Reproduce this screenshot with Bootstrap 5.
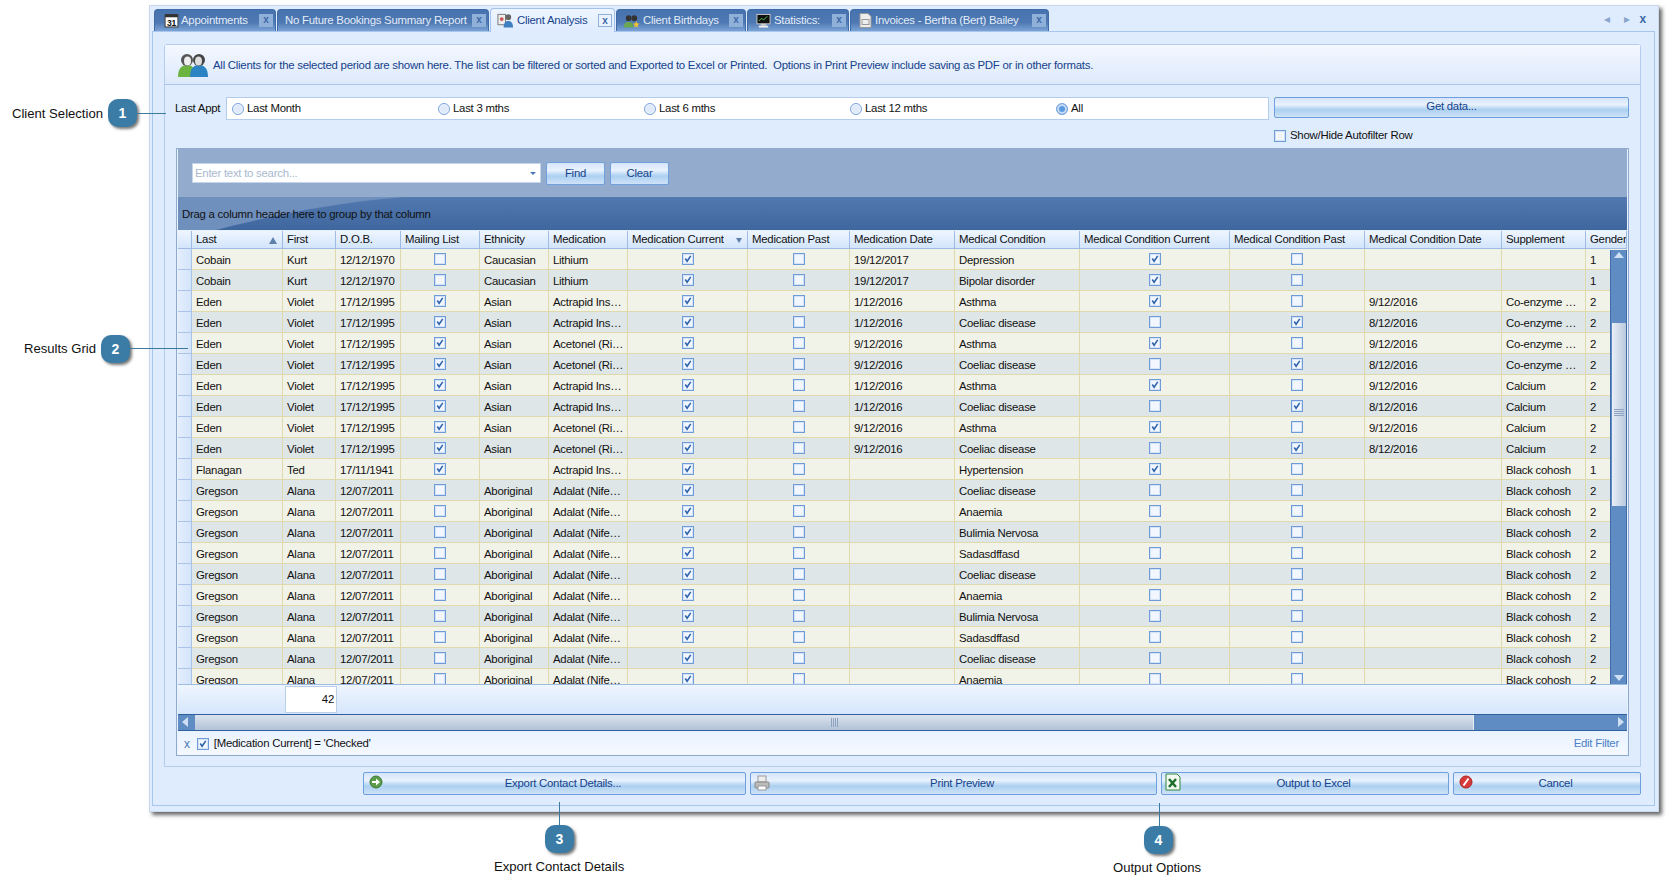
<!DOCTYPE html>
<html lang="en"><head><meta charset="utf-8"><title>Client Analysis</title>
<link href="https://cdn.jsdelivr.net/npm/bootstrap@5.3.0/dist/css/bootstrap.min.css" rel="stylesheet">
<style>
html,body{height:891px;overflow:hidden;background:#fff}
body{position:relative;font:11.4px/1.2 "Liberation Sans",Arial,sans-serif;letter-spacing:-.25px;color:#15428b}
.win{margin:5px 0 0 149px;width:1510px;height:807px;background:#dfecfe;border:1px solid #c9d8ec;box-shadow:3px 3px 4px #666;padding:0 3px 0 2px}
.tabs{height:25px;padding:3px 0 0 2px;position:relative}
.tb{height:22px;margin-right:1px;padding:0 2px 0 7px;border:1px solid #3f6ca8;border-bottom:0;border-radius:4px 4px 0 0;background:linear-gradient(#4672ad,#4f79b3 60%,#7ba3d6);color:#e3edfa;gap:3px;white-space:nowrap}
.tb.on{height:24px;margin-top:-1px;background:linear-gradient(#eef5ff,#dfecfe);border-color:#a3c2ea;color:#15428b;margin-bottom:-1px;z-index:1}
.tb .x{width:14px;height:13px;background:#8fb0d9;color:#3d6aa8;font:bold 10px/12px "Liberation Sans",sans-serif;text-align:center;margin-left:auto}
.tb.on .x{background:#eaf2ff;border:1px solid #8fb0d9;line-height:11px}
.t1{width:122px;padding-left:9px;gap:2px}.t2{width:212px}.t3{width:125px;padding-left:6px}.t4{width:130px;padding-left:6px}.t5{width:102px;padding-left:8px}.t6{width:199px;padding-left:8px}
.tnav{position:absolute;right:9px;top:6px;gap:10px;color:#8aa5cc;font-size:12px;line-height:14px}
.tnav span:first-child{margin-right:4px}
.tnav b{color:#3d6aa8}
.pane{height:775px;border:1px solid #a9c6ec;padding:12px 13px 0 11px}
.box{height:723px;border:1px solid #b4cdef;border-radius:3px 3px 0 0}
.info{height:40px;border-bottom:1px solid #a9c6ec;background:linear-gradient(#f3f8ff,#dde9fb);padding:0 0 0 12px;gap:4px}
.info span{padding-top:2px}
.body{padding:12px 11px 0}
.lab{width:51px;margin-left:-1px;color:#111;line-height:23px;white-space:nowrap}
.rg{width:1043px;height:23px;background:#fff;border:1px solid #b4cdef;padding:1px 0 0 5px;color:#111}
.rg>div{width:206px;gap:3px}
.form-check-input,.form-check-input[type=checkbox]{width:12px;height:12px;margin:0;border-radius:0;border:1px solid #6f9bd8;background-color:#f2f7ff;box-shadow:inset 0 0 0 1px #d5e3f7;float:none;flex:none;vertical-align:middle}
.form-check-input:checked{background-color:#f2f7ff;border-color:#6f9bd8;background-size:100%;background-image:url("data:image/svg+xml,%3Csvg xmlns='http://www.w3.org/2000/svg' viewBox='0 0 11 11'%3E%3Cpath d='M2.5 5l2 3 4-6' fill='none' stroke='%232f63ab' stroke-width='1.7'/%3E%3C/svg%3E")}
.form-check-input[type=radio]{width:12px;height:12px;border-radius:50%;border-color:#7ba4dc;background-color:#dfeafa;box-shadow:inset 0 0 0 1px #f2f7ff}
.form-check-input[type=radio]:checked{background-image:none;background-color:#5c9be0;box-shadow:inset 0 0 0 2px #c8dcf5}
.aero{border:1px solid #6f9fdc;border-radius:2px;background:linear-gradient(#d5e5fa,#e9f2fd 35%,#acd0f0 62%,#cfe2f8);color:#15428b;padding:0;font:inherit;line-height:1;letter-spacing:inherit}
.aero:hover{color:#15428b}
.getd{height:21px;padding-bottom:2px}
.shw{margin-top:11px;color:#111}
.grid{position:relative;height:608px;border:1px solid #8fa9cf;padding:0 1px;background:#e8f1fe}
.search{height:48px;background:#93abcc;padding:14px 0 0 14px;gap:5px}
.sinp{width:349px;height:20px;background:#fff;border:1px solid #c6d5ea;color:#a9b8cf;padding:0 2px;line-height:18px;position:relative}
.sinp::after{content:"";position:absolute;right:4px;top:8px;border:3px solid transparent;border-top-color:#4a78b5}
.sb{width:59px;height:23px;margin-top:-1px}
.gp{height:33px;position:relative;background:linear-gradient(#5279af,#3f679f);color:#111;padding-left:4px;line-height:35px;overflow:hidden}
.gp svg{position:absolute;left:0;top:0}
.gp span{position:relative}
.tw{position:relative;height:453px;overflow:hidden;margin-top:1px}
.grid table{table-layout:fixed;width:1449px;margin:0;color:#111;--bs-table-bg:transparent;border-collapse:separate;border-spacing:0}
.grid th,.grid td{padding:2px 0 0 4px;height:21px;line-height:18px;vertical-align:middle;white-space:nowrap;overflow:hidden;font-weight:400;border:0;border-right:1px solid #e0d9ab;border-bottom:1px solid #e0d9ab;box-shadow:none}
.grid th{height:18px;padding:0 0 0 4px;line-height:17px;background:linear-gradient(#eef5ff,#d3e5fb);border-color:#9dbbe3;position:relative}
.grid tr:nth-child(odd) td{background:#f1f2e8}
.grid tr:nth-child(even) td{background:#dee6e7}
.grid td.i{background:linear-gradient(90deg,#e4eefd,#d3e4fa)!important;border-color:#a9c4e8}
.grid td.c{text-align:center;padding:0;line-height:0}
.grid td.c .form-check-input{vertical-align:middle}
.sort{position:absolute;right:5px;top:6px;border:4px solid transparent;border-top:0;border-bottom:7px solid #5f80ab}
.fdown{position:absolute;right:5px;top:7px;border:3px solid transparent;border-top:5px solid #5f80ab;border-bottom:0}
.vs{position:absolute;right:0;top:19px;width:17px;height:434px;background:#5f8cc3;border:1px solid #3f6ca8;border-width:0 1px}
.vs i{position:absolute;left:1px;width:14px;top:73px;height:183px;background:linear-gradient(90deg,#e9eef6,#b8c8dd)}
.vs i::after{content:"";position:absolute;left:2px;right:2px;top:86px;height:8px;background:repeating-linear-gradient(#8ea3bf 0 1px,transparent 1px 2px)}
.vs b,.hs b{position:absolute;width:0;height:0;border:5px solid transparent}
.vs .u{left:3px;top:2px;border-bottom:6px solid #cfe0f5;border-top:0}
.vs .d{left:3px;bottom:3px;border-top:6px solid #cfe0f5;border-bottom:0}
.foot{height:30px;border-top:1px solid #9dbbe3;background:linear-gradient(#eef5ff,#d6e6fb);padding:1px 0 0 107px}
.sum{width:52px;height:27px;background:#fff;border:1px solid #bccfe8;color:#111;text-align:right;padding-right:2px;line-height:25px}
.hs{position:relative;height:17px;background:#5f8cc3;border:1px solid #2f5f9f;border-width:1px 0}
.hs i{position:absolute;left:17px;top:0;bottom:0;width:1279px;background:linear-gradient(#dbe3ee,#b2c2d7);border-right:1px solid #e8eef6}
.hs i::after{content:"";position:absolute;left:636px;top:3px;height:9px;width:8px;background:repeating-linear-gradient(90deg,#8ea3bf 0 1px,transparent 1px 2px)}
.hs .l{left:4px;top:2px;border-right:6px solid #cfe0f5;border-left:0}
.hs .r{right:3px;top:2px;border-left:6px solid #cfe0f5;border-right:0}
.flt{height:24px;background:linear-gradient(#e9f2ff,#f5f9ff);padding:1px 8px 0 6px;color:#111;gap:5px}
.flt .cx{color:#4a78b5;font:12px "Liberation Sans",sans-serif;margin-right:2px}
.flt .ef{margin-left:auto;color:#4d7fc4}
.bot{margin:5px -3px 0 199px;gap:4px}
.bb{height:23px;position:relative;display:flex;align-items:center;justify-content:center;padding-left:17px}
.bb svg{position:absolute;left:5px;top:2px}
.b1{width:383px}.b2{width:407px}.b3{width:288px}.b4{width:188px}
.b2 svg,.b3 svg{left:3px}.b3 svg{top:0}
.mk{position:absolute;color:#111;font:13.1px/1 "Liberation Sans",sans-serif;letter-spacing:0;white-space:nowrap}
.num{position:absolute;width:29px;height:28px;border-radius:10px;background:#3a7ca5;color:#fff;font:bold 14px/28px "Liberation Sans",sans-serif;letter-spacing:0;text-align:center;box-shadow:2px 2px 3px #777}
.ln{position:absolute;background:#3b7a9c}
.h{height:1px}.v{width:1px;height:24px}
.m1{left:12px;top:107px}.n1{left:108px;top:99px}.l1{left:137px;top:113px;width:29px}
.m2{left:24px;top:342px}.n2{left:101px;top:335px}.l2{left:130px;top:348px;width:58px}
.l3{left:559px;top:802px}.n3{left:545px;top:825px}.m3{left:494px;top:860px}
.l4{left:1159px;top:803px}.n4{left:1144px;top:826px}.m4{left:1113px;top:861px}
</style></head><body>
<div class="win">
 <div class="tabs d-flex">
  <div class="tb t1 d-flex align-items-center"><svg width="15" height="15" viewBox="0 0 14 14"><rect x="1" y="2" width="12" height="11" fill="#fff" stroke="#444"/><rect x="1" y="1" width="12" height="3" fill="#333"/><text x="7" y="12" font-size="8" font-weight="700" text-anchor="middle" fill="#111" font-family="Liberation Sans">31</text></svg>Appointments<span class="x">x</span></div>
  <div class="tb t2 d-flex align-items-center">No Future Bookings Summary Report<span class="x">x</span></div>
  <div class="tb t3 on d-flex align-items-center"><svg width="17" height="17" viewBox="0 0 18 17"><rect x="1" y="2" width="8" height="11" fill="#eee" stroke="#777"/><circle cx="5" cy="7" r="2" fill="#c55"/><circle cx="12" cy="5" r="3" fill="#666"/><path d="M7 16c0-6 3-7 5-7s5 1 5 7z" fill="#3d7fc0"/></svg>Client Analysis<span class="x">x</span></div>
  <div class="tb t4 d-flex align-items-center"><svg width="17" height="16" viewBox="0 0 18 16"><circle cx="6" cy="5" r="3" fill="#333"/><circle cx="12" cy="5" r="3" fill="#333"/><path d="M1 15c0-5 2-6 5-6s5 1 5 6z" fill="#6aa84f"/><path d="M14 8l1 2.500 2.500.3-2 1.700.6 2.500-2.100-1.300-2.100 1.300.6-2.500-2-1.700 2.500-.3z" fill="#f1c232"/></svg>Client Birthdays<span class="x">x</span></div>
  <div class="tb t5 d-flex align-items-center"><svg width="15" height="16" viewBox="0 0 16 16"><rect x="1" y="1" width="14" height="10" fill="#111" stroke="#ccc"/><path d="M3 8l3-3 2 2 4-4" stroke="#5c5" fill="none"/><rect x="5" y="11" width="6" height="2" fill="#ccc"/><rect x="3" y="13" width="10" height="2" fill="#eee"/></svg>Statistics:<span class="x">x</span></div>
  <div class="tb t6 d-flex align-items-center"><svg width="13" height="17" viewBox="0 0 13 16"><path d="M1 1h8l3 3v11H1z" fill="#eee" stroke="#999"/><rect x="3" y="7" width="7" height="5" fill="none" stroke="#999"/></svg>Invoices - Bertha (Bert) Bailey<span class="x">x</span></div>
  <div class="tnav d-flex"><span>◂</span><span>▸</span><b>x</b></div>
 </div>
 <div class="pane">
  <div class="box">
   <div class="info d-flex align-items-center">
    <svg width="32" height="28" viewBox="0 0 32 28"><path d="M1 26c0-9 4-12 9-12s9 3 9 12z" fill="#6cb33f"/><circle cx="10" cy="9" r="6" fill="#555"/><ellipse cx="10.500" cy="10" rx="3.500" ry="4.500" fill="#eee"/><path d="M13 26c0-9 4-12 9-12s9 3 9 12z" fill="#2b83c4"/><circle cx="22" cy="9" r="6" fill="#444"/><ellipse cx="21.500" cy="10" rx="3.500" ry="4.500" fill="#ddd"/></svg>
    <span>All Clients for the selected period are shown here. The list can be filtered or sorted and Exported to Excel or Printed.&nbsp; Options in Print Preview include saving as PDF or in other formats.</span>
   </div>
   <div class="body">
    <div class="d-flex" style="height:51px">
     <div class="lab">Last Appt</div>
     <div class="rg d-flex align-items-center">
      <div class="d-flex align-items-center"><input class="form-check-input" type="radio" name="p">Last Month</div>
      <div class="d-flex align-items-center"><input class="form-check-input" type="radio" name="p">Last 3 mths</div>
      <div class="d-flex align-items-center"><input class="form-check-input" type="radio" name="p">Last 6 mths</div>
      <div class="d-flex align-items-center"><input class="form-check-input" type="radio" name="p">Last 12 mths</div>
      <div class="d-flex align-items-center"><input class="form-check-input" type="radio" name="p" checked>All</div>
     </div>
     <div class="ms-auto" style="width:355px">
      <button class="btn aero w-100 getd">Get data...</button>
      <div class="d-flex align-items-center gap-1 shw"><input class="form-check-input" type="checkbox">Show/Hide Autofilter Row</div>
     </div>
    </div>
    <div class="grid">
     <div class="search d-flex"><div class="sinp">Enter text to search...</div><button class="btn aero sb">Find</button><button class="btn aero sb">Clear</button></div>
     <div class="gp"><svg width="240" height="33" viewBox="0 0 240 33"><path d="M0 0H226C150 6 90 20 38 33H0z" fill="#6f8fbd"/></svg><span>Drag a column header here to group by that column</span></div>
     <div class="tw">
      <table class="table"><colgroup id="cg"></colgroup><thead><tr id="hd"></tr></thead><tbody id="tb"></tbody></table>
      <div class="vs"><b class="u"></b><i></i><b class="d"></b></div>
     </div>
     <div class="foot"><div class="sum">42</div></div>
     <div class="hs"><b class="l"></b><i></i><b class="r"></b></div>
     <div class="flt d-flex align-items-center"><span class="cx">x</span><input class="form-check-input" type="checkbox" checked><span>[Medication Current] = 'Checked'</span><span class="ef">Edit Filter</span></div>
    </div>
   </div>
  </div>
  <div class="bot d-flex">
   <button class="btn aero bb b1"><svg width="14" height="16" viewBox="0 0 14 16"><circle cx="7" cy="7" r="6" fill="#5d9c4a" stroke="#3d7a35"/><path d="M3 6h4V3.500l4 3.500-4 3.500V8H3z" fill="#fff"/></svg>Export Contact Details...</button>
   <button class="btn aero bb b2"><svg width="16" height="16" viewBox="0 0 16 16"><rect x="4" y="1" width="8" height="6" fill="#eee" stroke="#999"/><rect x="1" y="7" width="14" height="6" rx="1" fill="#bbb" stroke="#888"/><rect x="4" y="11" width="8" height="4" fill="#fff" stroke="#999"/></svg>Print Preview</button>
   <button class="btn aero bb b3"><svg width="17" height="18" viewBox="0 0 17 18"><path d="M1 1h11l3 3v13H1z" fill="#f4f8f2" stroke="#2f8a3c"/><path d="M4 6l7 8M11 6l-7 8" stroke="#1d6f2c" stroke-width="2.500"/></svg>Output to Excel</button>
   <button class="btn aero bb b4"><svg width="14" height="16" viewBox="0 0 14 16"><circle cx="7" cy="7" r="6" fill="#d8393a" stroke="#a22"/><path d="M4.500 10.500l5-7" stroke="#fff" stroke-width="2"/></svg>Cancel</button>
  </div>
 </div>
</div>
<span class="mk m1">Client Selection</span><div class="num n1">1</div><div class="ln h l1"></div>
<span class="mk m2">Results Grid</span><div class="num n2">2</div><div class="ln h l2"></div>
<div class="ln v l3"></div><div class="num n3">3</div><span class="mk m3">Export Contact Details</span>
<div class="ln v l4"></div><div class="num n4">4</div><span class="mk m4">Output Options</span>
<script>
const W=[14,91,53,65,79,69,79,120,102,105,125,150,135,137,84,41];
cg.innerHTML=W.map(w=>`<col style="width:${w}px">`).join('');
const H=['','Last','First','D.O.B.','Mailing List','Ethnicity','Medication','Medication Current','Medication Past','Medication Date','Medical Condition','Medical Condition Current','Medical Condition Past','Medical Condition Date','Supplement','Gender'];
hd.innerHTML=H.map(h=>`<th>${h}${h=='Last'?'<span class="sort"></span>':h=='Medication Current'?'<span class="fdown"></span>':''}</th>`).join('');
const E=['Eden','Violet','17/12/1995',1,'Asian'],A='Actrapid Ins…',R='Acetonel (Ri…',G=['Gregson','Alana','12/07/2011',0,'Aboriginal','Adalat (Nife…',1,0,''],K='Black cohosh',C='Co-enzyme …';
const D=[['Cobain','Kurt','12/12/1970',0,'Caucasian','Lithium',1,0,'19/12/2017','Depression',1,0,'','','1'],
['Cobain','Kurt','12/12/1970',0,'Caucasian','Lithium',1,0,'19/12/2017','Bipolar disorder',1,0,'','','1']];
[[A,'1/12/2016','Asthma',1,0,'9/12/2016',C],[A,'1/12/2016','Coeliac disease',0,1,'8/12/2016',C],[R,'9/12/2016','Asthma',1,0,'9/12/2016',C],[R,'9/12/2016','Coeliac disease',0,1,'8/12/2016',C],
[A,'1/12/2016','Asthma',1,0,'9/12/2016','Calcium'],[A,'1/12/2016','Coeliac disease',0,1,'8/12/2016','Calcium'],[R,'9/12/2016','Asthma',1,0,'9/12/2016','Calcium'],[R,'9/12/2016','Coeliac disease',0,1,'8/12/2016','Calcium']]
.forEach(r=>D.push([...E,r[0],1,0,r[1],r[2],r[3],r[4],r[5],r[6],'2']));
D.push(['Flanagan','Ted','17/11/1941',1,'',A,1,0,'','Hypertension',1,0,'',K,'1']);
['Coeliac disease','Anaemia','Bulimia Nervosa','Sadasdffasd','Coeliac disease','Anaemia','Bulimia Nervosa','Sadasdffasd','Coeliac disease','Anaemia'].forEach(m=>D.push([...G,m,0,0,'',K,'2']));
const CK=new Set([3,6,7,10,11]);
tb.innerHTML=D.map(r=>'<tr><td class="i"></td>'+r.map((v,i)=>CK.has(i)?`<td class="c"><input class="form-check-input" type="checkbox"${v?' checked':''}></td>`:`<td>${v}</td>`).join('')+'</tr>').join('');
</script>
<script src="https://cdn.jsdelivr.net/npm/bootstrap@5.3.0/dist/js/bootstrap.bundle.min.js"></script>
</body></html>
